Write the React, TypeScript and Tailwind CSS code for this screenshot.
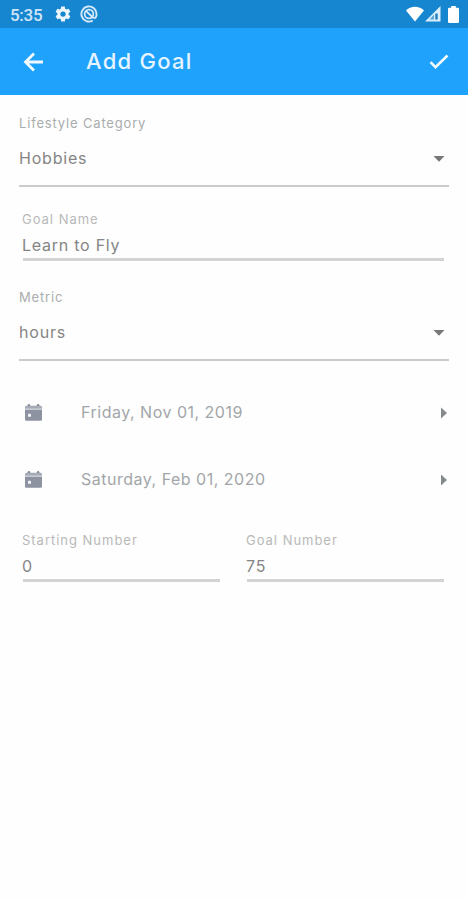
import { ReactNode } from "react";

const CalendarIcon = () => (
  <svg width="17" height="17" viewBox="0 0 17 17">
    <path d="M2.5 1.6a1.4 1.6 0 0 1 2.8 0v.8H2.5zM11.7 1.6a1.4 1.6 0 0 1 2.8 0v.8h-2.8z" fill="#7b8291" />
    <path d="M1.5 1.8h14A1.5 1.5 0 0 1 17 3.3v1.5H0V3.3a1.5 1.5 0 0 1 1.5-1.5z" fill="#a4aab6" />
    <path d="M0 5.6h17v9.6a1.6 1.6 0 0 1-1.6 1.6H1.6A1.6 1.6 0 0 1 0 15.2z" fill="#8d93a1" />
    <rect x="3" y="9.8" width="3" height="3" rx="0.4" fill="#f4f5f7" />
  </svg>
);

const SettingsIcon = () => (
  <svg width="18" height="18" viewBox="0 0 24 24" fill="#eef6fd">
    <path d="M19.43 12.98c.04-.32.07-.64.07-.98s-.03-.66-.07-.98l2.11-1.65a.5.5 0 0 0 .12-.64l-2-3.46a.5.5 0 0 0-.61-.22l-2.49 1a7.3 7.3 0 0 0-1.69-.98l-.38-2.65A.49.49 0 0 0 14 2h-4a.49.49 0 0 0-.49.42l-.38 2.65c-.61.25-1.17.59-1.69.98l-2.49-1a.49.49 0 0 0-.61.22l-2 3.46a.49.49 0 0 0 .12.64l2.11 1.65c-.04.32-.07.65-.07.98s.03.66.07.98l-2.11 1.65a.5.5 0 0 0-.12.64l2 3.46c.12.22.39.3.61.22l2.49-1c.52.4 1.08.73 1.69.98l.38 2.65c.03.24.24.42.49.42h4c.25 0 .46-.18.49-.42l.38-2.65c.61-.25 1.17-.59 1.69-.98l2.49 1c.23.09.49 0 .61-.22l2-3.46a.5.5 0 0 0-.12-.64zM12 15.5a3.5 3.5 0 1 1 0-7 3.5 3.5 0 0 1 0 7z" />
  </svg>
);

const AtIcon = () => (
  <svg width="18" height="18" viewBox="0 0 19 19" fill="none" stroke="#d5eafa">
    <path d="M13.5 16.4A8 8 0 1 1 17.5 9.5c0 2.8-1.3 4.3-2.8 4.3" strokeWidth="2" />
    <circle cx="9.5" cy="9.5" r="4.6" strokeWidth="1.8" />
    <path d="M6.2 6.2l8.3 7.8" strokeWidth="2" />
  </svg>
);

const StatusBar = () => (
  <div className="flex h-[28px] items-center bg-[#1786d0] pl-[10px] pr-[9px]">
    <span className="w-[44px] pt-[2px] font-[Roboto] text-[17px] font-medium leading-none tracking-[-0.3px] text-[#cfe6f8]">
      5:35
    </span>
    <SettingsIcon />
    <span className="ml-[8px]">
      <AtIcon />
    </span>
    <div className="ml-auto flex items-center">
      <svg width="18" height="16" viewBox="0 0 18 16" fill="#fff">
        <path d="M0 4.6C5-.4 13-.4 18 4.6L9 15.6z" />
      </svg>
      <svg className="ml-[1px]" width="16" height="16" viewBox="0 0 16 16">
        <path d="M0 15.5L15.5 0v15.5z" fill="#dceefb" />
        <path d="M9 8.5v5H4.5z" fill="#5aa8de" />
        <path d="M10.3 7.5h2.4v6h-2.4z" fill="#1b7cc0" />
      </svg>
      <svg className="ml-[7px]" width="11" height="17" viewBox="0 0 11 17" fill="#fff">
        <path d="M3.2 0h4.6v1.8h2A1.2 1.2 0 0 1 11 3v12.7a1.2 1.2 0 0 1-1.2 1.2H1.2A1.2 1.2 0 0 1 0 15.7V3a1.2 1.2 0 0 1 1.2-1.2h2z" />
      </svg>
    </div>
  </div>
);

const Header = () => (
  <header className="flex h-[67px] items-center bg-[#1ea2fc] pl-[23px] pr-[19px]">
    <svg width="21" height="20" viewBox="0 0 21 20" fill="none" stroke="#f3faff" strokeWidth="2.8">
      <path d="M20 10H3M11 1.5L2.5 10l8.5 8.5" />
    </svg>
    <h1 className="-mt-[2px] ml-[42px] text-[22px] font-medium leading-[24px] tracking-[1.25px] text-[#e6f4ff]">
      Add Goal
    </h1>
    <svg className="ml-auto" width="20" height="16" viewBox="0 0 20 16" fill="none" stroke="#f3faff" strokeWidth="2.6">
      <path d="M1.5 8.2l5 5L18.5 1.5" />
    </svg>
  </header>
);

type FieldProps = {
  label: string;
  value: string;
};

const SelectField = ({ label, value }: FieldProps) => (
  <div className="border-b-2 border-[#cbcbcb] pb-[17px]">
    <p className="text-[13px] leading-[16px] tracking-[0.83px] text-[#a9adad]">{label}</p>
    <div className="mt-[17px] flex h-[20px] items-center justify-between pr-[4px]">
      <span className="text-[16px] leading-[20px] tracking-[0.8px] text-[#858585]">{value}</span>
      <svg className="mt-[2px]" width="12" height="6" viewBox="0 0 12 6" fill="#777">
        <path d="M0.5 0h11L6 5.8z" />
      </svg>
    </div>
  </div>
);

const TextField = ({ label, value }: FieldProps) => (
  <div className="flex-1">
    <p className="text-[13px] leading-[16px] tracking-[0.98px] text-[#b9b9b9]">{label}</p>
    <p className="mt-[8px] text-[16px] leading-[20px] tracking-[0.75px] text-[#858585]">{value}</p>
    <div className="ml-[1px] mr-[-1px] mt-[3px] h-[3px] bg-[#d3d3d3]" />
  </div>
);

const DateRow = ({ children }: { children: ReactNode }) => (
  <div className="flex h-[67px] items-center pl-[6px] pr-[2px]">
    <CalendarIcon />
    <span className="-mt-[2px] ml-[39px] text-[16px] leading-[20px] tracking-[0.5px] text-[#a3a6a9]">
      {children}
    </span>
    <svg className="ml-auto" width="6" height="12" viewBox="0 0 6 12" fill="#858a8c">
      <path d="M0 0.5v11l6-5.5z" />
    </svg>
  </div>
);

const App = () => {
  return (
    <div className="h-[900px] w-[468px] overflow-hidden bg-[#fefefe] font-[Inter,sans-serif]">
      <StatusBar />
      <Header />
      <main className="px-[19px] pt-[20px]">
        <SelectField label="Lifestyle Category" value="Hobbies" />
        <div className="ml-[3px] mr-[6px] mt-[24px] flex">
          <TextField label="Goal Name" value="Learn to Fly" />
        </div>
        <div className="mt-[28px]">
          <SelectField label="Metric" value="hours" />
        </div>
        <div className="mt-[18px]">
          <DateRow>Friday, Nov 01, 2019</DateRow>
          <DateRow>Saturday, Feb 01, 2020</DateRow>
        </div>
        <div className="ml-[3px] mr-[6px] mt-[19px] flex gap-[27px]">
          <TextField label="Starting Number" value="0" />
          <TextField label="Goal Number" value="75" />
        </div>
      </main>
    </div>
  );
};

export default App;
